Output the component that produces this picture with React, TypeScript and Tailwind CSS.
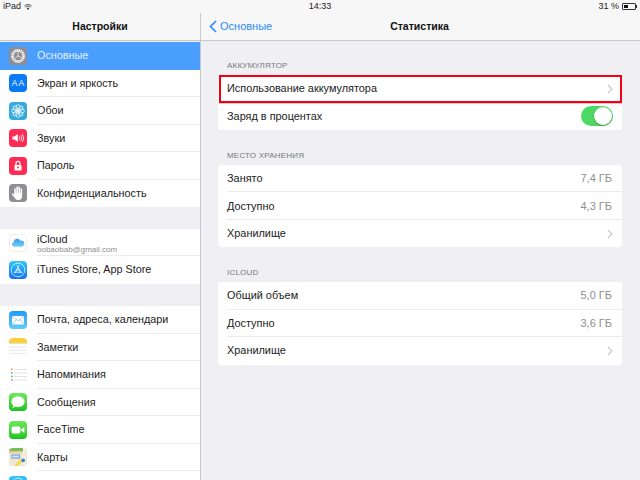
import React from "react";

const Tile = ({ className, children }: { className: string; children?: React.ReactNode }) => (
  <div className={`w-[18px] h-[18px] rounded-[4px] overflow-hidden shrink-0 flex items-center justify-center ${className}`}>
    {children}
  </div>
);

const Svg = ({ children }: { children: React.ReactNode }) => (
  <svg width="18" height="18" viewBox="0 0 18 18" fill="none">{children}</svg>
);

const Gear = () => (
  <Svg>
    <circle cx="9" cy="9" r="6" stroke="#fff" strokeWidth="1.8" strokeDasharray="1.3 0.6" />
    <circle cx="9" cy="9" r="4.8" stroke="#fff" strokeWidth="0.8" />
    <path d="M9 9V4.6M9 9l3.8 1.9M9 9l-3.3 2.6" stroke="#fff" strokeWidth="0.7" />
  </Svg>
);
const Flower = () => (
  <Svg>
    <g stroke="#fff" strokeWidth="0.8" opacity="0.95">
      <ellipse cx="9" cy="5.6" rx="2" ry="3" />
      <ellipse cx="9" cy="12.4" rx="2" ry="3" />
      <ellipse cx="5.6" cy="9" rx="3" ry="2" />
      <ellipse cx="12.4" cy="9" rx="3" ry="2" />
      <ellipse cx="6.6" cy="6.6" rx="2" ry="3" transform="rotate(-45 6.6 6.6)" />
      <ellipse cx="11.4" cy="6.6" rx="2" ry="3" transform="rotate(45 11.4 6.6)" />
      <ellipse cx="6.6" cy="11.4" rx="2" ry="3" transform="rotate(45 6.6 11.4)" />
      <ellipse cx="11.4" cy="11.4" rx="2" ry="3" transform="rotate(-45 11.4 11.4)" />
    </g>
  </Svg>
);
const Speaker = () => (
  <Svg>
    <path d="M3.5 7.4h2L8.8 5v8L5.5 10.6h-2z" fill="#fff" />
    <path d="M10.2 7.4a2.4 2.4 0 0 1 0 3.2M11.6 6a4.4 4.4 0 0 1 0 6M13 4.8a6.2 6.2 0 0 1 0 8.4" stroke="#fff" strokeWidth="0.8" />
  </Svg>
);
const Lock = () => (
  <Svg>
    <rect x="5.5" y="8" width="7" height="5.5" rx="0.7" fill="#fff" />
    <circle cx="9" cy="10.4" r="0.9" fill="#fe2b55" />
    <path d="M7 8V6.4a2 2 0 0 1 4 0V8" stroke="#fff" strokeWidth="1.2" />
  </Svg>
);
const Hand = () => (
  <Svg>
    <path d="M6 10V5M8.1 9.5V3.4M10.2 9.5V3.4M12.3 10V5" stroke="#fff" strokeWidth="1.6" strokeLinecap="round" />
    <path d="M5.2 9h7.9v3.4c0 2.3-1.6 3.6-3.8 3.6-1.9 0-2.8-.9-3.6-2.3L3 10.8c-.5-.9.6-1.6 1.3-.9l.9 1z" fill="#fff" />
  </Svg>
);
const Cloud = () => (
  <Svg>
    <defs>
      <linearGradient id="cl" x1="0" y1="0" x2="0" y2="1">
        <stop offset="0" stopColor="#2f9df0" />
        <stop offset="1" stopColor="#7dd0f8" />
      </linearGradient>
    </defs>
    <path d="M4.6 13.2a2.7 2.7 0 0 1-.4-5.3A3.9 3.9 0 0 1 11.6 6.4 3.5 3.5 0 0 1 13.5 13.2z" fill="url(#cl)" />
  </Svg>
);
const AppStore = () => (
  <Svg>
    <circle cx="9" cy="9" r="6.8" stroke="#fff" strokeWidth="0.7" />
    <path d="M9.8 4.6 6 12M8.2 4.6 12 12M4.8 11.2h8.4M6.6 9h4.8" stroke="#fff" strokeWidth="0.8" />
  </Svg>
);
const Mail = () => (
  <Svg>
    <rect x="3" y="5" width="12" height="8.4" rx="0.6" fill="#fff" />
    <path d="M3 5.2l6 4.6 6-4.6M3 13.2l4.4-4.6M15 13.2l-4.4-4.6" stroke="#5ab4f5" strokeWidth="0.6" />
  </Svg>
);
const Notes = () => (
  <Svg>
    <rect width="18" height="5.4" fill="#fdcf3a" />
    <path d="M0 5.5h18" stroke="#d8d8d8" strokeWidth="0.6" />
    <path d="M0 9h18M0 12.2h18M0 15.4h18" stroke="#dcdcdc" strokeWidth="0.7" />
  </Svg>
);
const Reminders = () => (
  <Svg>
    <path d="M5 3.5h13M5 7h13M5 10.5h13M5 14h13" stroke="#d6d6d6" strokeWidth="0.7" />
    <circle cx="2.8" cy="3.2" r="1" fill="#f7a13a" />
    <circle cx="2.8" cy="6.8" r="1" fill="#4fb4f0" />
    <circle cx="2.8" cy="10.4" r="1" fill="#66d64f" />
    <circle cx="2.8" cy="14" r="1" fill="#d07fe6" />
  </Svg>
);
const Bubble = () => (
  <Svg>
    <ellipse cx="9" cy="8.6" rx="6.6" ry="5.4" fill="#fff" />
    <path d="M4.4 11.6c0 1.4-.6 2.4-1.4 3 1.6 0 3-.6 3.8-1.6z" fill="#fff" />
  </Svg>
);
const Video = () => (
  <Svg>
    <rect x="2.6" y="5.6" width="8.8" height="6.8" rx="1.5" fill="#fff" />
    <path d="M12 8.4l3.4-2.4v6L12 9.6z" fill="#fff" />
  </Svg>
);
const MapIcon = () => (
  <Svg>
    <rect width="18" height="18" fill="#efe6cf" />
    <path d="M0 0h14v3.4H0z" fill="#78bd5a" />
    <path d="M0 3.4h13v2H0z" fill="#f3c9a0" />
    <path d="M14 0h2.2v18H14z" fill="#f5f0e4" />
    <path d="M2.5 6.5h8.5v4H2.5z" fill="#5a9ae6" />
    <path d="M3.4 7.5h6.6v2H3.4z" fill="#d8e6f8" />
    <path d="M5 18 12 10.5l2.5 2L8.5 18z" fill="#f6d84a" />
    <circle cx="14.2" cy="12.4" r="1.8" fill="#2f7fe6" />
  </Svg>
);
const Safari = () => (
  <Svg>
    <circle cx="9" cy="9" r="6.8" stroke="#fff" strokeWidth="0.7" />
  </Svg>
);

const side: { label: string; tile: string; icon: React.ReactNode; active?: boolean }[] = [
  { label: "Основные", tile: "bg-[#8e8e93]", icon: <Gear />, active: true },
  { label: "Экран и яркость", tile: "bg-[#0a7bf5]", icon: <span className="text-white text-[8.5px] tracking-[1px] pl-px leading-none">AA</span> },
  { label: "Обои", tile: "bg-[#35aadc]", icon: <Flower /> },
  { label: "Звуки", tile: "bg-[#fe2b55]", icon: <Speaker /> },
  { label: "Пароль", tile: "bg-[#fe2b55]", icon: <Lock /> },
  { label: "Конфиденциальность", tile: "bg-[#8e8e93]", icon: <Hand /> },
];
const apps = [
  { label: "Почта, адреса, календари", tile: "bg-gradient-to-b from-[#1e9bf5] to-[#62ccfa]", icon: <Mail /> },
  { label: "Заметки", tile: "bg-white", icon: <Notes /> },
  { label: "Напоминания", tile: "bg-white", icon: <Reminders /> },
  { label: "Сообщения", tile: "bg-gradient-to-b from-[#6de85a] to-[#16c41e]", icon: <Bubble /> },
  { label: "FaceTime", tile: "bg-gradient-to-b from-[#6de85a] to-[#16c41e]", icon: <Video /> },
  { label: "Карты", tile: "bg-[#efe6cf]", icon: <MapIcon /> },
  { label: "", tile: "bg-gradient-to-b from-[#35c8fa] to-[#1a78f0]", icon: <Safari /> },
];

const SideRow = ({ label, tile, icon, active, last }: { label: string; tile: string; icon: React.ReactNode; active?: boolean; last?: boolean }) => (
  <div className={`h-[27.5px] flex items-center pl-[9px] relative shrink-0 ${active ? "bg-[#4a9efd]" : "bg-white"}`}>
    <Tile className={tile}>{icon}</Tile>
    <span className={`ml-[10px] text-[10.8px] leading-none ${active ? "text-[#e4f0ff]" : "text-[#222]"}`}>{label}</span>
    {!last && !active && <div className="absolute left-[37px] right-0 bottom-0 h-px bg-[#ebebee]" />}
  </div>
);

const Chevron = () => (
  <svg width="6" height="10" viewBox="0 0 6 10" fill="none">
    <path d="M1 1l4 4-4 4" stroke="#c7c7cc" strokeWidth="1.1" />
  </svg>
);

const Row = ({ label, value, chevron, last, children }: { label: string; value?: string; chevron?: boolean; last?: boolean; children?: React.ReactNode }) => (
  <div className="h-[27.5px] flex items-center justify-between pl-[9px] pr-[9px] relative">
    <span className="text-[10.9px] leading-none text-[#222]">{label}</span>
    {value && <span className="text-[11px] leading-none text-[#8e8e93] pr-[1px]">{value}</span>}
    {chevron && <Chevron />}
    {children}
    {!last && <div className="absolute left-[9px] right-0 bottom-0 h-px bg-[#ebebee]" />}
  </div>
);

const Section = ({ title, children }: { title: string; children: React.ReactNode }) => (
  <div className="flex flex-col">
    <div className="h-[13px] pl-[9px] pt-px mb-[3px] flex items-center text-[8px] text-[#77777c] tracking-[0.2px] leading-none">{title}</div>
    <div className="bg-white rounded-[3px] flex flex-col">{children}</div>
  </div>
);

export default function App() {
  return (
    <div className="w-[640px] h-[480px] overflow-hidden bg-[#efeff4] flex flex-col font-['Liberation_Sans',sans-serif]">
      <div className="h-[13px] shrink-0 bg-[#f7f7f8] grid grid-cols-3 items-center pl-[3px] pr-[3px] text-[9px] leading-none text-[#222]">
        <div className="flex items-center gap-[3px]">
          <span>iPad</span>
          <svg width="8" height="6" viewBox="0 0 8 6" fill="none">
            <path d="M.4 2a5.2 5.2 0 0 1 7.2 0M1.6 3.2a3.5 3.5 0 0 1 4.8 0" stroke="#333" strokeWidth="0.8" />
            <path d="M4 6 2.8 4.4a1.8 1.8 0 0 1 2.4 0z" fill="#333" />
          </svg>
        </div>
        <div className="text-center">14:33</div>
        <div className="flex items-center justify-end gap-[3px]">
          <span>31 %</span>
          <div className="flex items-center">
            <div className="w-[14px] h-[7px] border border-[#333] rounded-[1px] flex items-stretch p-px">
              <div className="w-[4px] bg-[#111]" />
            </div>
            <div className="w-px h-[3px] bg-[#333]" />
          </div>
        </div>
      </div>
      <div className="flex-1 flex min-h-0">
        <div className="w-[200px] shrink-0 flex flex-col bg-[#efeff4] overflow-hidden border-r border-[#c8c7cc] box-content">
          <div className="h-[27px] shrink-0 bg-[#f7f7f8] border-b border-[#c8c8cc] flex items-center justify-center text-[10.5px] font-bold text-[#111] box-content">
            Настройки
          </div>
          <div className="h-px shrink-0" />
          {side.map((r, i) => (
            <SideRow key={r.label} {...r} last={i === 5} />
          ))}
          <div className="h-[22px] shrink-0" />
          <div className="h-[27px] shrink-0 flex items-center pl-[9px] bg-white relative">
            <Tile className="bg-white border border-[#eee]"><Cloud /></Tile>
            <div className="ml-[10px] pt-[3px] flex flex-col gap-[2px]">
              <span className="text-[10.8px] leading-none text-[#222]">iCloud</span>
              <span className="text-[8px] leading-none text-[#8e8e93]">oobaobab@gmail.com</span>
            </div>
            <div className="absolute left-[37px] right-0 bottom-0 h-px bg-[#ebebee]" />
          </div>
          <SideRow label="iTunes Store, App Store" tile="bg-gradient-to-b from-[#35c8fa] to-[#1a6ff0]" icon={<AppStore />} last />
          <div className="h-[22.5px] shrink-0" />
          {apps.map((r) => (
            <SideRow key={r.label} {...r} />
          ))}
        </div>
        <div className="flex-1 flex flex-col min-w-0">
          <div className="h-[27px] shrink-0 bg-[#f7f7f8] border-b border-[#c8c8cc] grid grid-cols-3 items-center box-content">
            <div className="flex items-center pl-[8px] gap-[3px] text-[#2a8bf7] text-[11px]">
              <svg width="8" height="13" viewBox="0 0 8 13" fill="none">
                <path d="M7 1 1.5 6.5 7 12" stroke="#2a8bf7" strokeWidth="1.6" />
              </svg>
              <span>Основные</span>
            </div>
            <div className="text-center text-[10.5px] font-bold text-[#111] pr-[2px]">Статистика</div>
            <div />
          </div>
          <div className="pt-[18px] pl-[17px] pr-[18px] flex flex-col gap-[18.75px]">
            <Section title="АККУМУЛЯТОР">
              <div className="relative">
                <Row label="Использование аккумулятора" chevron last />
                <div className="absolute left-px right-0 top-0 bottom-0 border-2 border-[#f00012] shadow-[0_1px_0_#ffc0c4]" />
              </div>
              <Row label="Заряд в процентах" last>
                <div className="w-[32px] h-[20px] rounded-full bg-[#4cd964] flex items-center justify-end p-[1px]">
                  <div className="w-[18px] h-[18px] rounded-full bg-white shadow-[0_1px_2px_rgba(0,0,0,0.3)]" />
                </div>
              </Row>
            </Section>
            <Section title="МЕСТО ХРАНЕНИЯ">
              <Row label="Занято" value="7,4 ГБ" />
              <Row label="Доступно" value="4,3 ГБ" />
              <Row label="Хранилище" chevron last />
            </Section>
            <Section title="ICLOUD">
              <Row label="Общий объем" value="5,0 ГБ" />
              <Row label="Доступно" value="3,6 ГБ" />
              <Row label="Хранилище" chevron last />
            </Section>
          </div>
        </div>
      </div>
    </div>
  );
}
